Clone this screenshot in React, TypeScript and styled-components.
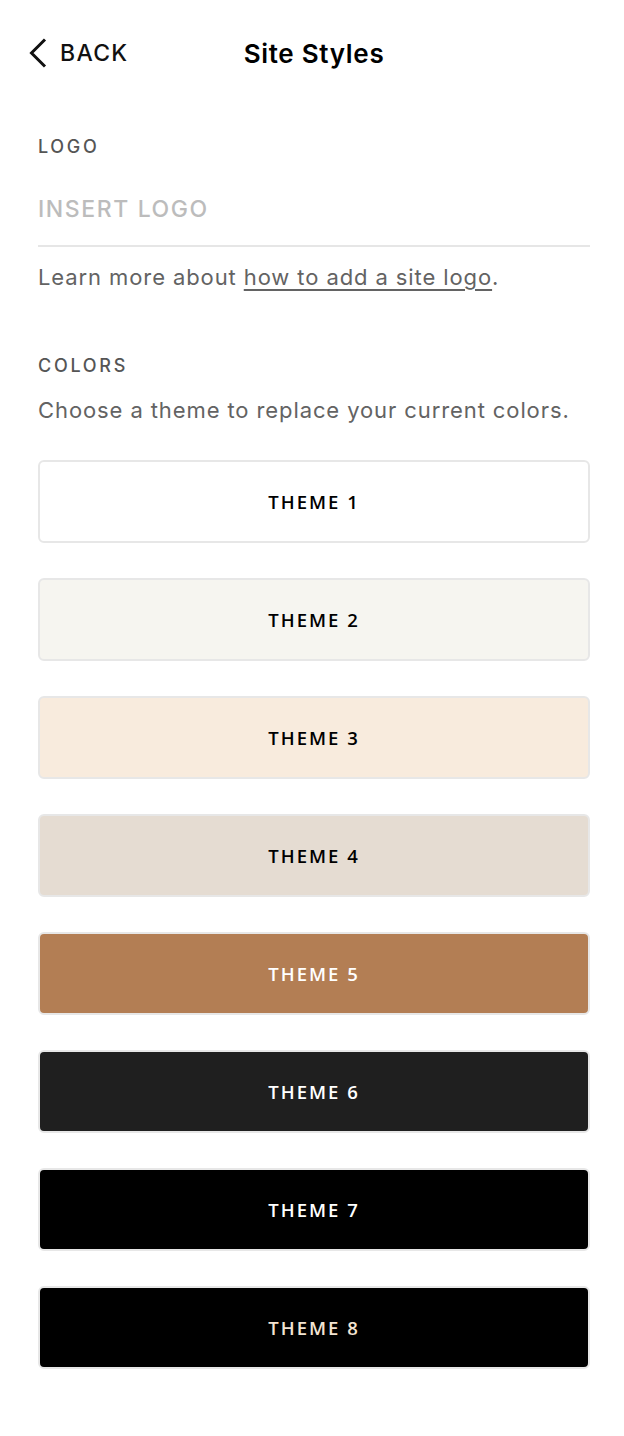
import React from 'react';
import styled, { createGlobalStyle } from 'styled-components';

const GlobalStyle = createGlobalStyle`
  html, body {
    margin: 0;
    padding: 0;
    background: #fff;
  }
  body {
    font-family: Inter, 'Liberation Sans', sans-serif;
    -webkit-font-smoothing: antialiased;
  }
`;

const Page = styled.div`
  width: 624px;
  min-height: 1436px;
  box-sizing: border-box;
  padding: 0 34px 0 38px;
`;

const Header = styled.header`
  display: flex;
  align-items: center;
  height: 106px;
  margin: 0 -34px 0 -38px;
  padding-left: 26px;
  position: relative;
`;

const BackButton = styled.button`
  display: flex;
  align-items: center;
  gap: 12px;
  border: 0;
  background: none;
  padding: 0;
  font-family: Inter, 'Liberation Sans', sans-serif;
  font-size: 23px;
  font-weight: 500;
  letter-spacing: 1.3px;
  color: #111;
  cursor: pointer;

  svg {
    display: block;
  }
`;

const Title = styled.h1`
  position: absolute;
  left: 50%;
  transform: translateX(-50%);
  margin: 0 0 0 2px;
  font-size: 26px;
  font-weight: 600;
  letter-spacing: 0.7px;
  color: #000;
  white-space: nowrap;
`;

const Section = styled.section<{ $top: number }>`
  margin-top: ${(p) => p.$top}px;
`;

const Label = styled.h2`
  margin: 0;
  font-size: 18px;
  line-height: 22px;
  font-weight: 500;
  letter-spacing: 2.7px;
  color: #555;
`;

const LogoInput = styled.div`
  margin-top: 36px;
  padding-bottom: 21px;
  border-bottom: 2px solid #e6e6e6;
  font-size: 23px;
  line-height: 30px;
  font-weight: 500;
  letter-spacing: 1.6px;
  color: #bcbcbc;
`;

const Help = styled.p<{ $gap: number }>`
  margin: ${(p) => p.$gap}px 0 0;
  font-size: 22px;
  line-height: 30px;
  letter-spacing: 0.9px;
  color: #636363;

  a {
    color: #636363;
    text-decoration: underline;
    text-underline-offset: 4px;
    text-decoration-thickness: 1.5px;
  }
`;

const ThemeList = styled.div`
  display: flex;
  flex-direction: column;
  gap: 35px;
  margin-top: 35px;
  padding-bottom: 66px;
`;

const ThemeButton = styled.button<{ $bg: string; $fg: string }>`
  display: flex;
  align-items: center;
  justify-content: center;
  width: 100%;
  height: 83px;
  border: 2px solid #e7e7e7;
  border-radius: 6px;
  background: ${(p) => p.$bg};
  color: ${(p) => p.$fg};
  font-family: 'Open Sans', 'Liberation Sans', sans-serif;
  font-size: 18.5px;
  font-weight: 600;
  letter-spacing: 2px;
  cursor: pointer;
`;

const themes = [
  { name: 'THEME 1', bg: '#ffffff', fg: '#000000' },
  { name: 'THEME 2', bg: '#f6f5f0', fg: '#000000' },
  { name: 'THEME 3', bg: '#f8ebdd', fg: '#000000' },
  { name: 'THEME 4', bg: '#e5dcd2', fg: '#000000' },
  { name: 'THEME 5', bg: '#b37e54', fg: '#ffffff' },
  { name: 'THEME 6', bg: '#1f1f1f', fg: '#ffffff' },
  { name: 'THEME 7', bg: '#000000', fg: '#ffffff' },
  { name: 'THEME 8', bg: '#000000', fg: '#f3e4d2' },
];

export default function App() {
  return (
    <>
      <GlobalStyle />
      <Page>
        <Header>
          <BackButton>
            <svg width="22" height="30" viewBox="0 0 22 30" fill="none">
              <path d="M19 1.5 L5.5 15 L19 28.5" stroke="#111" strokeWidth="3" />
            </svg>
            BACK
          </BackButton>
          <Title>Site Styles</Title>
        </Header>

        <Section $top={30}>
          <Label>LOGO</Label>
          <LogoInput>INSERT LOGO</LogoInput>
          <Help $gap={15}>
            Learn more about <a href="#">how to add a site logo</a>.
          </Help>
        </Section>

        <Section $top={63}>
          <Label>COLORS</Label>
          <Help $gap={18}>Choose a theme to replace your current colors.</Help>
          <ThemeList>
            {themes.map((t) => (
              <ThemeButton key={t.name} $bg={t.bg} $fg={t.fg}>
                {t.name}
              </ThemeButton>
            ))}
          </ThemeList>
        </Section>
      </Page>
    </>
  );
}
